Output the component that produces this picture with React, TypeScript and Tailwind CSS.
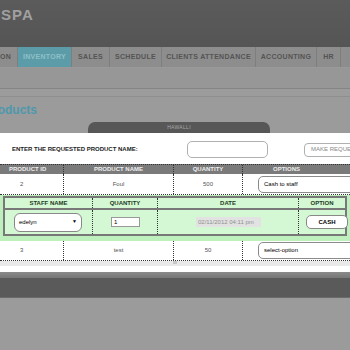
const navItems = [
  { label: "ON", w: "w-[18px]", active: false, left: true },
  { label: "INVENTORY", w: "w-[54px]", active: true },
  { label: "SALES", w: "w-[38px]", active: false },
  { label: "SCHEDULE", w: "w-[52px]", active: false },
  { label: "CLIENTS ATTENDANCE", w: "w-[94px]", active: false },
  { label: "ACCOUNTING", w: "w-[61px]", active: false },
  { label: "HR", w: "w-[24px]", active: false },
];

function SelectBox({ label }: { label: string }) {
  return (
    <div className="h-[17px] w-[120px] rounded-[5px] border border-[#8a8a8a] bg-white pl-[5px] flex items-center text-[6px] text-black">
      {label}
    </div>
  );
}

export default function App() {
  return (
    <div className="w-[350px] h-[350px] overflow-hidden bg-[#9b9b9b] font-['Liberation_Sans',Arial,sans-serif]">
      {/* Header */}
      <div className="h-[47px] bg-gradient-to-b from-[#5b5b5b] to-[#555555] pl-[1px] pt-[3px]">
        <span className="text-[15px] font-bold tracking-[1px] text-[#a0a0a0]">SPA</span>
      </div>

      {/* Nav */}
      <div className="flex h-[21px] bg-[#8d8d8d] border-b border-[#999]">
        {navItems.map((item) => (
          <div
            key={item.label}
            className={`${item.w} shrink-0 h-full flex items-center ${item.left ? "justify-start" : "justify-center"} border-r border-[#7e7e7e] text-[7px] font-bold tracking-[0.3px] whitespace-nowrap ${item.active ? "bg-[#5c9ca8] text-[#8fc0c8]" : "text-[#545454]"}`}
          >
            {item.label}
          </div>
        ))}
      </div>

      {/* Sub band */}
      <div className="h-[21px] bg-[#979797] border-b border-[#858585]" />
      <div className="h-[8px] bg-[#9c9c9c] border-b border-[#8f8f8f]" />

      {/* Heading */}
      <div className="h-[25px] flex items-center">
        <h1 className="ml-[-15px] text-[12px] font-bold text-[#4e98ad]">Products</h1>
      </div>

      {/* Location tab */}
      <div className="pl-[88px]">
        <div className="w-[182px] h-[11px] rounded-t-[7px] bg-[#575757] flex items-center justify-center text-[5px] text-[#a8a8a8] tracking-[0.3px]">
          HAWALLI
        </div>
      </div>

      {/* Modal */}
      <div className="h-[139px] bg-white w-[420px] pt-[8px]">
        <div className="flex items-center h-[17px]">
          <div className="w-[187px] shrink-0 pl-[12px] text-[6px] font-bold text-[#222]">
            ENTER THE REQUESTED PRODUCT NAME:
          </div>
          <div className="w-[81px] h-[17px] shrink-0 rounded-[5px] border border-[#b0b0b0]" />
          <div className="w-[36px] shrink-0" />
          <div className="w-[70px] h-[14px] shrink-0 rounded-[4px] border border-[#b0b0b0] flex items-center pl-[6px] text-[6px] text-[#888]">
            MAKE REQUEST
          </div>
        </div>

        {/* Table header */}
        <div className="mt-[6px] grid grid-cols-[63px_110px_69px_180px] h-[10px] bg-[#7a7a7a] border-t border-dotted border-[#333] text-[6px] font-bold text-[#eee]">
          <div className="flex items-center pl-[9px]">PRODUCT ID</div>
          <div className="flex items-center justify-center border-l border-dotted border-[#333]">PRODUCT NAME</div>
          <div className="flex items-center justify-center border-l border-dotted border-[#333]">QUANTITY</div>
          <div className="flex items-center pl-[30px] border-l border-dotted border-[#333]">OPTIONS</div>
        </div>

        {/* Row 1 */}
        <div className="grid grid-cols-[63px_110px_69px_180px] h-[21px] border-b border-dotted border-[#333] text-[6px] text-[#555]">
          <div className="flex items-center pl-[20px]">2</div>
          <div className="flex items-center justify-center border-l border-dotted border-[#333]">Foul</div>
          <div className="flex items-center justify-center border-l border-dotted border-[#333]">500</div>
          <div className="flex items-center pl-[15px] border-l border-dotted border-[#333]">
            <SelectBox label="Cash to staff" />
          </div>
        </div>

        {/* Request row */}
        <div className="w-[350px] h-[46px] bg-[#bdf0bd] pt-[1px] px-[3px] pb-[3px]">
          <div className="border-2 border-[#787878] bg-[#d4f8d4]">
            <div className="grid grid-cols-[87px_65px_141px_1fr] h-[12px] border-b-2 border-[#787878] text-[6px] font-bold text-[#1e3a1e]">
              <div className="flex items-center justify-center">STAFF NAME</div>
              <div className="flex items-center justify-center border-l border-dotted border-[#333]">QUANTITY</div>
              <div className="flex items-center justify-center border-l border-dotted border-[#333]">DATE</div>
              <div className="flex items-center justify-center border-l border-dotted border-[#333]">OPTION</div>
            </div>
            <div className="grid grid-cols-[87px_65px_141px_1fr] h-[24px] text-[6px]">
              <div className="flex items-center pl-[9px]">
                <div className="w-[68px] h-[19px] rounded-[6px] border border-[#888] bg-white flex items-center justify-between pl-[4px] pr-[4px] text-black">
                  <span>edelyn</span>
                  <span className="text-[5px]">▼</span>
                </div>
              </div>
              <div className="flex items-center pl-[18px] border-l border-dotted border-[#333]">
                <div className="w-[29px] h-[10px] border border-[#999] bg-white flex items-center pl-[2px] text-black">1</div>
              </div>
              <div className="flex items-center pl-[38px] border-l border-dotted border-[#333]">
                <div className="w-[65px] h-[10px] bg-[#e2e2e2] flex items-center pl-[2px] text-[#909090] whitespace-nowrap">
                  02/11/2012 04:11 pm
                </div>
              </div>
              <div className="flex items-center pl-[7px] border-l border-dotted border-[#333]">
                <div className="w-[42px] h-[14px] rounded-[5px] border border-[#888] bg-white flex items-center justify-center font-bold text-black">
                  CASH
                </div>
              </div>
            </div>
          </div>
        </div>

        {/* Row 3 */}
        <div className="grid grid-cols-[63px_110px_69px_180px] h-[20px] border-b border-dotted border-[#333] text-[6px] text-[#555]">
          <div className="flex items-center pl-[20px]">3</div>
          <div className="flex items-center justify-center border-l border-dotted border-[#333]">test</div>
          <div className="flex items-center justify-center border-l border-dotted border-[#333]">50</div>
          <div className="flex items-center pl-[15px] border-l border-dotted border-[#333]">
            <SelectBox label="select-option" />
          </div>
        </div>

        {/* Scrollbar */}
        <div className="w-[350px] h-[5px] bg-[#e9e9e9] flex justify-center">
          <div className="w-[4px] h-[3px] bg-[#c8c8c8]" />
        </div>
      </div>

      {/* Page footer (dimmed) */}
      <div className="h-[6px] bg-gradient-to-b from-[#8a8a8a] to-[#777]" />
      <div className="h-[20px] bg-[#5a5a5a] border-b border-[#6a6a6a]" />
    </div>
  );
}
